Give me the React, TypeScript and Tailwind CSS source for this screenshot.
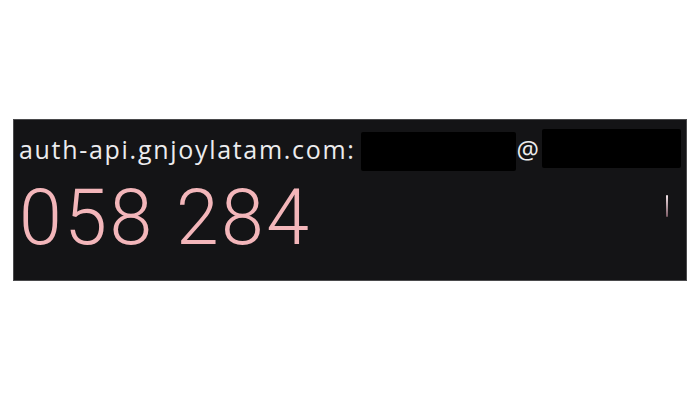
export default function App() {
  return (
    <div className="w-[700px] h-[400px] bg-white pt-[119px] pl-[13px]">
      <div
        className="w-[674px] h-[162px] bg-[#141416] border border-[#4a4a4c] pl-[5px] pr-[4px] pt-[7px] flex flex-col"
        style={{ fontFamily: '"Open Sans", Roboto, sans-serif' }}
      >
        {/* account line */}
        <div className="flex items-center h-[42px]">
          <span className="text-[25px] text-[#ececee] leading-none tracking-[1.7px] mt-[2px]">auth-api.gnjoylatam.com:</span>
          <div className="w-[155px] h-[39px] bg-black ml-[5px] mt-[6px] rounded-[2px]" />
          <span className="text-[25px] text-[#ececee] leading-none ml-[1px] mt-[2px]">@</span>
          <div className="w-[139px] h-[39px] bg-black ml-[3px] mt-[1px] rounded-[2px]" />
        </div>
        {/* code */}
        <div className="flex items-start justify-between mt-[11px]">
          <span
            className="text-[77px] leading-none text-[#f3b6ba] font-light tracking-[2.5px]"
            style={{ fontFamily: 'Roboto, "Open Sans", sans-serif' }}
          >
            058 284
          </span>
          <div className="w-[2px] h-[22px] mt-[15px] mr-[14px] bg-gradient-to-b from-[#f5e6ea] to-[#7a5a64] rounded-full" />
        </div>
      </div>
    </div>
  );
}
